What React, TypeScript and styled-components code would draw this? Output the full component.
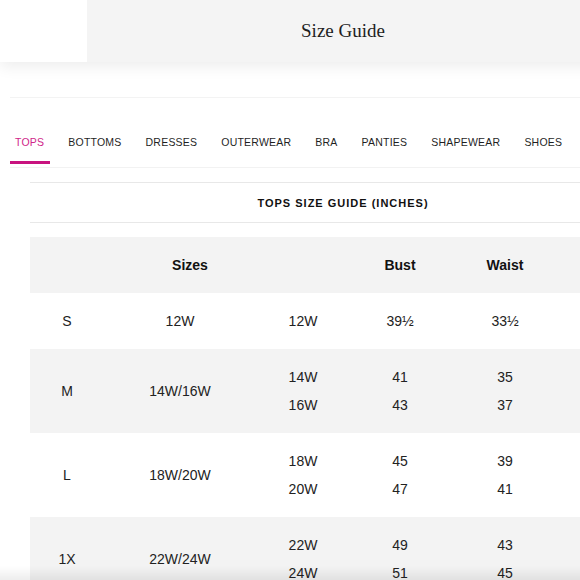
import React from "react";
import styled, { createGlobalStyle } from "styled-components";

const Global = createGlobalStyle`
  html, body { margin: 0; padding: 0; background: #fff; overflow: hidden; }
  body { font-family: "Liberation Sans", Arial, sans-serif; color: #222; }
`;

const Page = styled.div`
  width: 686px;
  position: relative;
`;

const Header = styled.header`
  display: flex;
  height: 62px;
  box-shadow: 0 5px 14px rgba(0, 0, 0, 0.07);
  position: relative;
  z-index: 1;
`;

const HeaderSide = styled.div`
  width: 87px;
  background: #fff;
`;

const HeaderBar = styled.div`
  flex: 1;
  background: #f4f4f4;
  display: flex;
  align-items: center;
  justify-content: center;
  padding-right: 87px;
`;

const Title = styled.h1`
  margin: 0;
  font-family: "Liberation Serif", "Times New Roman", serif;
  font-weight: 400;
  font-size: 19px;
  color: #1e1e1e;
`;

const Divider = styled.div`
  margin: 35px 0 0 10px;
  height: 1px;
  background: #f3f3f3;
`;

const TabList = styled.nav`
  display: flex;
  gap: 13px;
  margin-left: 10px;
  padding-bottom: 3px;
  border-bottom: 1px solid #f2f2f2;
`;

const Tab = styled.div<{ $active?: boolean }>`
  padding: 37px 6px 12px 5px;
  font-size: 10.5px;
  line-height: 14px;
  letter-spacing: 0.22px;
  color: ${(p) => (p.$active ? "#d0268a" : "#1f1f1f")};
  border-bottom: 3px solid ${(p) => (p.$active ? "#c8137f" : "transparent")};
  white-space: nowrap;
`;

const Section = styled.section`
  margin-left: 30px;
  margin-top: 14px;
  width: 626px;
`;

const SectionTitle = styled.div`
  border-top: 1px solid #e8e8e8;
  border-bottom: 1px solid #e8e8e8;
  height: 39px;
  display: flex;
  align-items: center;
  justify-content: center;
  font-size: 11px;
  font-weight: 700;
  letter-spacing: 1px;
  color: #111;
`;

const Table = styled.div`
  margin-top: 14px;
  width: 626px;
`;

const HeadRow = styled.div`
  display: grid;
  grid-template-columns: 74px 172px 74px 100px 110px 96px;
  height: 56px;
  align-items: center;
  background: #f3f3f3;
`;

const HeadCell = styled.div`
  text-align: center;
  font-size: 14px;
  font-weight: 700;
  color: #111;
`;

const Row = styled.div<{ $shade?: boolean }>`
  display: grid;
  grid-template-columns: 74px 152px 94px 100px 110px 96px;
  padding: 14px 0;
  background: ${(p) => (p.$shade ? "#f3f3f3" : "#fff")};
  align-items: center;
`;

const Cell = styled.div`
  text-align: center;
  font-size: 14px;
  line-height: 28px;
  color: #222;
`;

const Stack = styled.div`
  display: flex;
  flex-direction: column;
`;

const Line = styled.div`
  text-align: center;
  font-size: 14px;
  line-height: 28px;
  color: #222;
`;

const BottomFade = styled.div`
  position: fixed;
  left: 0;
  right: 0;
  bottom: 0;
  height: 14px;
  background: linear-gradient(to bottom, rgba(0, 0, 0, 0), rgba(0, 0, 0, 0.07));
  pointer-events: none;
`;

const tabs = ["TOPS", "BOTTOMS", "DRESSES", "OUTERWEAR", "BRA", "PANTIES", "SHAPEWEAR", "SHOES"];

type Item = { w: string; bust: string; waist: string };
const rows: { size: string; range: string; items: Item[] }[] = [
  { size: "S", range: "12W", items: [{ w: "12W", bust: "39½", waist: "33½" }] },
  {
    size: "M",
    range: "14W/16W",
    items: [
      { w: "14W", bust: "41", waist: "35" },
      { w: "16W", bust: "43", waist: "37" },
    ],
  },
  {
    size: "L",
    range: "18W/20W",
    items: [
      { w: "18W", bust: "45", waist: "39" },
      { w: "20W", bust: "47", waist: "41" },
    ],
  },
  {
    size: "1X",
    range: "22W/24W",
    items: [
      { w: "22W", bust: "49", waist: "43" },
      { w: "24W", bust: "51", waist: "45" },
    ],
  },
];

export default function App() {
  return (
    <>
      <Global />
      <Page>
        <Header>
          <HeaderSide />
          <HeaderBar>
            <Title>Size Guide</Title>
          </HeaderBar>
        </Header>
        <Divider />
        <TabList>
          {tabs.map((t, i) => (
            <Tab key={t} $active={i === 0}>
              {t}
            </Tab>
          ))}
        </TabList>
        <Section>
          <SectionTitle>TOPS SIZE GUIDE (INCHES)</SectionTitle>
          <Table>
            <HeadRow>
              <HeadCell />
              <HeadCell>Sizes</HeadCell>
              <HeadCell />
              <HeadCell>Bust</HeadCell>
              <HeadCell>Waist</HeadCell>
              <HeadCell />
            </HeadRow>
            {rows.map((r, i) => (
              <Row key={r.size} $shade={i % 2 === 1}>
                <Cell>{r.size}</Cell>
                <Cell>{r.range}</Cell>
                <Stack>
                  {r.items.map((it) => (
                    <Line key={it.w}>{it.w}</Line>
                  ))}
                </Stack>
                <Stack>
                  {r.items.map((it) => (
                    <Line key={it.w}>{it.bust}</Line>
                  ))}
                </Stack>
                <Stack>
                  {r.items.map((it) => (
                    <Line key={it.w}>{it.waist}</Line>
                  ))}
                </Stack>
                <Cell />
              </Row>
            ))}
          </Table>
        </Section>
      </Page>
      <BottomFade />
    </>
  );
}
